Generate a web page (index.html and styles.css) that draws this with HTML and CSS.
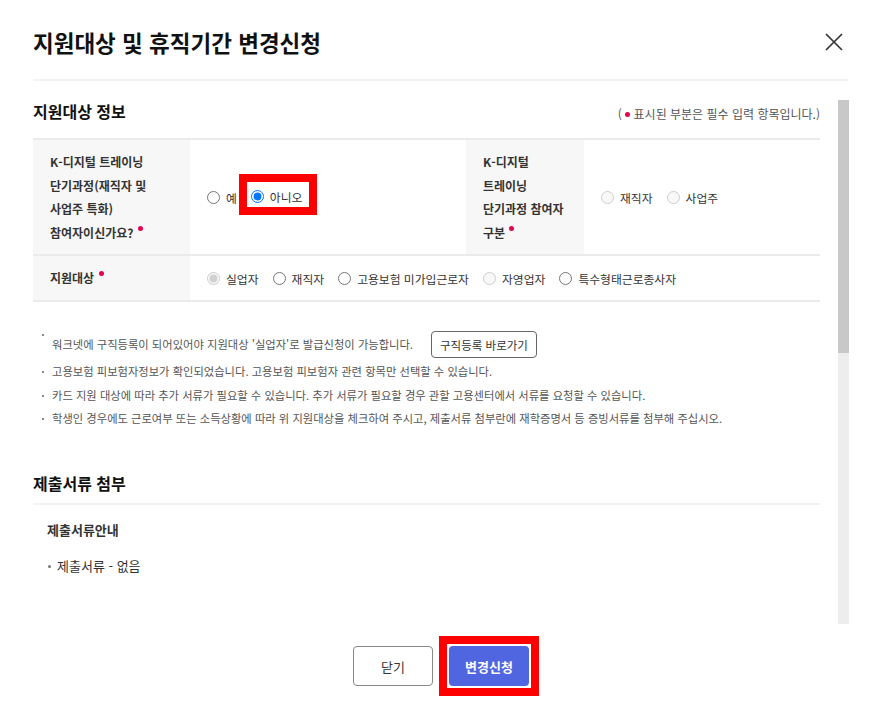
FILE: index.html
```html
<!DOCTYPE html>
<html lang="ko">
<head>
    <meta charset="UTF-8">
    <meta name="viewport" content="width=device-width, initial-scale=1.0">
    <title>지원대상 및 휴직기간 변경신청</title>
    <link rel="stylesheet" href="styles.css">
</head>
<body>
    <div class="modal">
        <header class="modal-header">
            <h1 class="modal-title">지원대상 및 휴직기간 변경신청</h1>
            <button type="button" class="btn-close" aria-label="닫기">
                <svg viewBox="0 0 18 18" width="18" height="18">
                    <path d="M1 1L17 17M17 1L1 17" stroke="#333" stroke-width="1.7" fill="none"/>
                </svg>
            </button>
        </header>

        <div class="modal-body">
            <div class="scroll-content">
                <div class="section-head">
                    <h2 class="section-title">지원대상 정보</h2>
                    <p class="required-note">( <span class="req-dot"></span> 표시된 부분은 필수 입력 항목입니다.)</p>
                </div>

                <table class="info-table">
                    <tr>
                        <th class="th-wide">K-디지털 트레이닝<br>단기과정(재직자 및<br>사업주 특화)<br>참여자이신가요? <span class="req-dot"></span></th>
                        <td class="td-wide">
                            <div class="radio-group">
                                <label class="radio"><input type="radio" name="kdt">예</label>
                                <label class="radio radio-marked"><input type="radio" name="kdt" checked>아니오</label>
                            </div>
                        </td>
                        <th class="th-narrow">K-디지털<br>트레이닝<br>단기과정 참여자<br>구분 <span class="req-dot"></span></th>
                        <td>
                            <div class="radio-group">
                                <label class="radio"><input type="radio" name="kdtType" disabled>재직자</label>
                                <label class="radio"><input type="radio" name="kdtType" disabled>사업주</label>
                            </div>
                        </td>
                    </tr>
                    <tr>
                        <th>지원대상 <span class="req-dot"></span></th>
                        <td colspan="3" class="td-row">
                            <div class="radio-group">
                                <label class="radio"><input type="radio" name="target" checked disabled>실업자</label>
                                <label class="radio"><input type="radio" name="target">재직자</label>
                                <label class="radio"><input type="radio" name="target">고용보험 미가입근로자</label>
                                <label class="radio"><input type="radio" name="target" disabled>자영업자</label>
                                <label class="radio"><input type="radio" name="target">특수형태근로종사자</label>
                            </div>
                        </td>
                    </tr>
                </table>

                <ul class="notice-list">
                    <li class="notice-item has-btn">
                        <span>워크넷에 구직등록이 되어있어야 지원대상 '실업자'로 발급신청이 가능합니다.</span>
                        <button type="button" class="btn-small">구직등록 바로가기</button>
                    </li>
                    <li class="notice-item">고용보험 피보험자정보가 확인되었습니다. 고용보험 피보험자 관련 항목만 선택할 수 있습니다.</li>
                    <li class="notice-item">카드 지원 대상에 따라 추가 서류가 필요할 수 있습니다. 추가 서류가 필요할 경우 관할 고용센터에서 서류를 요청할 수 있습니다.</li>
                    <li class="notice-item">학생인 경우에도 근로여부 또는 소득상황에 따라 위 지원대상을 체크하여 주시고, 제출서류 첨부란에 재학증명서 등 증빙서류를 첨부해 주십시오.</li>
                </ul>

                <div class="attach-section">
                    <h2 class="section-title attach-title">제출서류 첨부</h2>
                    <h3 class="attach-sub">제출서류안내</h3>
                    <ul class="doc-list">
                        <li>제출서류 - 없음</li>
                    </ul>
                </div>
            </div>

            <div class="scrollbar">
                <div class="scrollbar-thumb"></div>
            </div>
        </div>

        <footer class="modal-footer">
            <button type="button" class="btn btn-outline">닫기</button>
            <span class="mark-box">
                <button type="button" class="btn btn-primary">변경신청</button>
            </span>
        </footer>
    </div>
</body>
</html>
```

FILE: styles.css
```css
:root {
    --text-dark: #111;
    --text-color: #333;
    --text-sub: #555;
    --line-color: #ebebeb;
    --th-bg: #f7f7f7;
    --required: #e5004f;
    --primary: #4f66e0;
    --mark: #ff0000;
}

* {
    margin: 0;
    padding: 0;
    box-sizing: border-box;
}

body {
    font-family: "Noto Sans CJK KR", "Noto Sans", sans-serif;
    background: #fff;
    color: var(--text-color);
}

.modal {
    width: 878px;
    height: 717px;
    display: flex;
    flex-direction: column;
}

/* header */
.modal-header {
    height: 81px;
    margin: 0 30px 0 33px;
    padding-top: 5px;
    border-bottom: 2px solid #f2f2f2;
    display: flex;
    align-items: center;
    justify-content: space-between;
}

.modal-title {
    font-size: 22.5px;
    font-weight: 700;
    color: var(--text-dark);
}

.btn-close {
    border: none;
    background: none;
    width: 24px;
    height: 24px;
    margin-right: 2px;
    display: flex;
    align-items: center;
    justify-content: center;
    cursor: pointer;
}

/* scroll body */
.modal-body {
    margin: 19px 0 0 33px;
    height: 524px;
    display: flex;
}

.scroll-content {
    width: 787px;
    overflow: hidden;
}

.scrollbar {
    width: 11px;
    margin-left: 18px;
    background: #ededed;
}

.scrollbar-thumb {
    height: 253px;
    background: #c8c8c8;
}

.section-head {
    display: flex;
    align-items: flex-end;
    justify-content: space-between;
    margin-bottom: 15px;
}

.section-title {
    font-size: 16px;
    font-weight: 700;
    color: var(--text-dark);
    line-height: 23px;
}

.required-note {
    font-size: 12px;
    color: var(--text-sub);
    line-height: 18px;
}

.req-dot {
    display: inline-block;
    width: 5px;
    height: 5px;
    border-radius: 50%;
    background: var(--required);
    vertical-align: middle;
    position: relative;
    top: -1px;
}

th .req-dot {
    top: -6px;
    margin-left: 1px;
}

/* table */
.info-table {
    width: 100%;
    border-collapse: collapse;
    border-top: 2px solid var(--line-color);
}

.info-table tr {
    border-bottom: 2px solid var(--line-color);
}

.info-table th {
    background: var(--th-bg);
    text-align: left;
    font-size: 12px;
    font-weight: 700;
    line-height: 23.5px;
    color: var(--text-color);
    padding: 10px 17px;
    vertical-align: middle;
}

.info-table .th-wide {
    width: 157px;
}

.info-table .td-wide {
    width: 276px;
}

.info-table .th-narrow {
    width: 118px;
}

.info-table td {
    padding: 0 17px;
    vertical-align: middle;
    font-size: 11.8px;
}

.info-table .td-row {
    height: 46px;
}

.radio-group {
    display: flex;
    align-items: center;
    gap: 14px;
}

.radio {
    display: flex;
    align-items: center;
    gap: 6px;
    color: var(--text-color);
    line-height: 17px;
}

.radio input {
    width: 13px;
    height: 13px;
    margin: 0;
}

.radio-marked {
    padding: 4px 5px 0 2px;
    margin: -6px 0 0 -2px;
    outline: 8px solid var(--mark);
    outline-offset: 2px;
}

/* notices */
.notice-list {
    list-style: none;
    margin-top: 29px;
}

.notice-item {
    position: relative;
    padding-left: 19px;
    font-size: 11.3px;
    line-height: 23.5px;
    color: var(--text-sub);
}

.notice-item::before {
    content: "";
    position: absolute;
    left: 9px;
    top: 11px;
    width: 2px;
    height: 2px;
    background: #888;
}

.notice-item.has-btn {
    display: flex;
    align-items: center;
    gap: 18px;
    margin-bottom: 2px;
}

.notice-item.has-btn::before {
    top: 3px;
}

.btn-small {
    height: 27px;
    padding: 0 8px;
    font-family: inherit;
    font-size: 11.5px;
    color: var(--text-color);
    background: #fff;
    border: 1px solid #666;
    border-radius: 4px;
    cursor: pointer;
}

/* attachments */
.attach-section {
    margin-top: 41px;
}

.attach-title {
    padding-bottom: 8px;
    border-bottom: 2px solid #f2f2f2;
}

.attach-sub {
    font-size: 13px;
    font-weight: 700;
    color: var(--text-color);
    margin: 14px 0 0 14px;
    line-height: 22px;
}

.doc-list {
    list-style: none;
    margin: 14px 0 0 14px;
}

.doc-list li {
    position: relative;
    padding-left: 10px;
    font-size: 13px;
    line-height: 22px;
    color: var(--text-color);
}

.doc-list li::before {
    content: "";
    position: absolute;
    left: 1px;
    top: 10px;
    width: 3px;
    height: 3px;
    border-radius: 50%;
    background: #777;
}

/* footer */
.modal-footer {
    display: flex;
    justify-content: center;
    gap: 16px;
    padding: 22px 0 0 4px;
}

.mark-box {
    display: flex;
    outline: 8px solid var(--mark);
    outline-offset: 2px;
}

.btn {
    width: 80px;
    height: 40px;
    border-radius: 4px;
    font-family: inherit;
    font-size: 13px;
    cursor: pointer;
}

.btn-outline {
    background: #fff;
    color: var(--text-color);
    border: 1px solid #888;
}

.btn-primary {
    background: var(--primary);
    color: #fff;
    font-weight: 700;
    border: none;
}
```
